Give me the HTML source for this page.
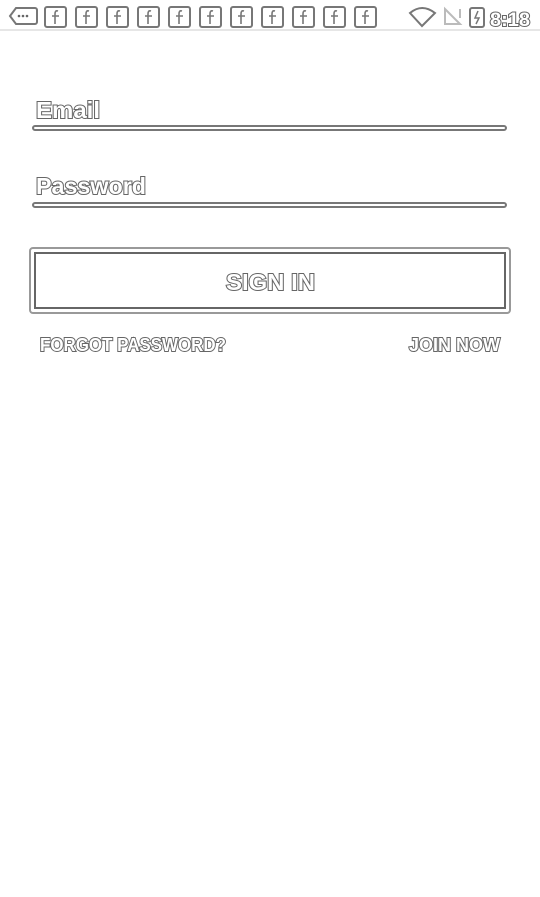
<!DOCTYPE html>
<html><head><meta charset="utf-8"><style>
html,body{margin:0;padding:0;background:#fff;width:540px;height:897px;overflow:hidden}
svg{display:block}
text{font-family:"Liberation Sans",sans-serif;font-weight:bold;fill:#fff;stroke:#666;stroke-width:2px;paint-order:stroke}
</style></head><body>
<svg width="540" height="897" viewBox="0 0 540 897" xmlns="http://www.w3.org/2000/svg">
<g fill="none" stroke="#777" stroke-width="2">
  <path d="M16 8 H35 a2 2 0 0 1 2 2 V22 a2 2 0 0 1 -2 2 H16 L10 16 Z"/>
  <g fill="#666" stroke="none"><circle cx="19" cy="16" r="1.3"/><circle cx="23" cy="16" r="1.3"/><circle cx="27" cy="16" r="1.3"/></g>
  <g id="f">
    <rect x="45" y="7" width="21" height="20" rx="2"/>
    <path d="M58 11 q-3 -1 -3 3 V24 M52 16 H59" stroke-width="1.6"/>
  </g>
  <use href="#f" x="31"/><use href="#f" x="62"/><use href="#f" x="93"/><use href="#f" x="124"/>
  <use href="#f" x="155"/><use href="#f" x="186"/><use href="#f" x="217"/><use href="#f" x="248"/>
  <use href="#f" x="279"/><use href="#f" x="310"/>
  <path d="M410 13 Q422 3 435 13 L422 26 Z"/>
  <path d="M445 9 L460 24 H445 Z M460 9 V18" stroke="#bbb"/>
  <rect x="470" y="8" width="14" height="19" rx="2"/>
  <path d="M478 11 l-3 7 h4 l-3 6" stroke-width="1.5"/>
  <path d="M0 30 H540" stroke="#ccc" stroke-width="1"/>
  <rect x="33" y="126" width="473" height="4" rx="2"/>
  <rect x="33" y="203" width="473" height="4" rx="2"/>
  <rect x="30" y="248" width="480" height="65" rx="3" stroke="#999"/>
  <rect x="35" y="253" width="470" height="55" stroke="#666"/>
</g>
<text x="490" y="26" font-size="19" textLength="40" lengthAdjust="spacingAndGlyphs">8:18</text>
<text x="36" y="118" font-size="23" textLength="64" lengthAdjust="spacingAndGlyphs">Email</text>
<text x="36" y="194" font-size="23" textLength="110" lengthAdjust="spacingAndGlyphs">Password</text>
<text x="226" y="290" font-size="23" textLength="89" lengthAdjust="spacingAndGlyphs">SIGN IN</text>
<text x="40" y="351" font-size="18" textLength="186" lengthAdjust="spacingAndGlyphs">FORGOT PASSWORD?</text>
<text x="409" y="351" font-size="18" textLength="91" lengthAdjust="spacingAndGlyphs">JOIN NOW</text>
</svg>
</body></html>
